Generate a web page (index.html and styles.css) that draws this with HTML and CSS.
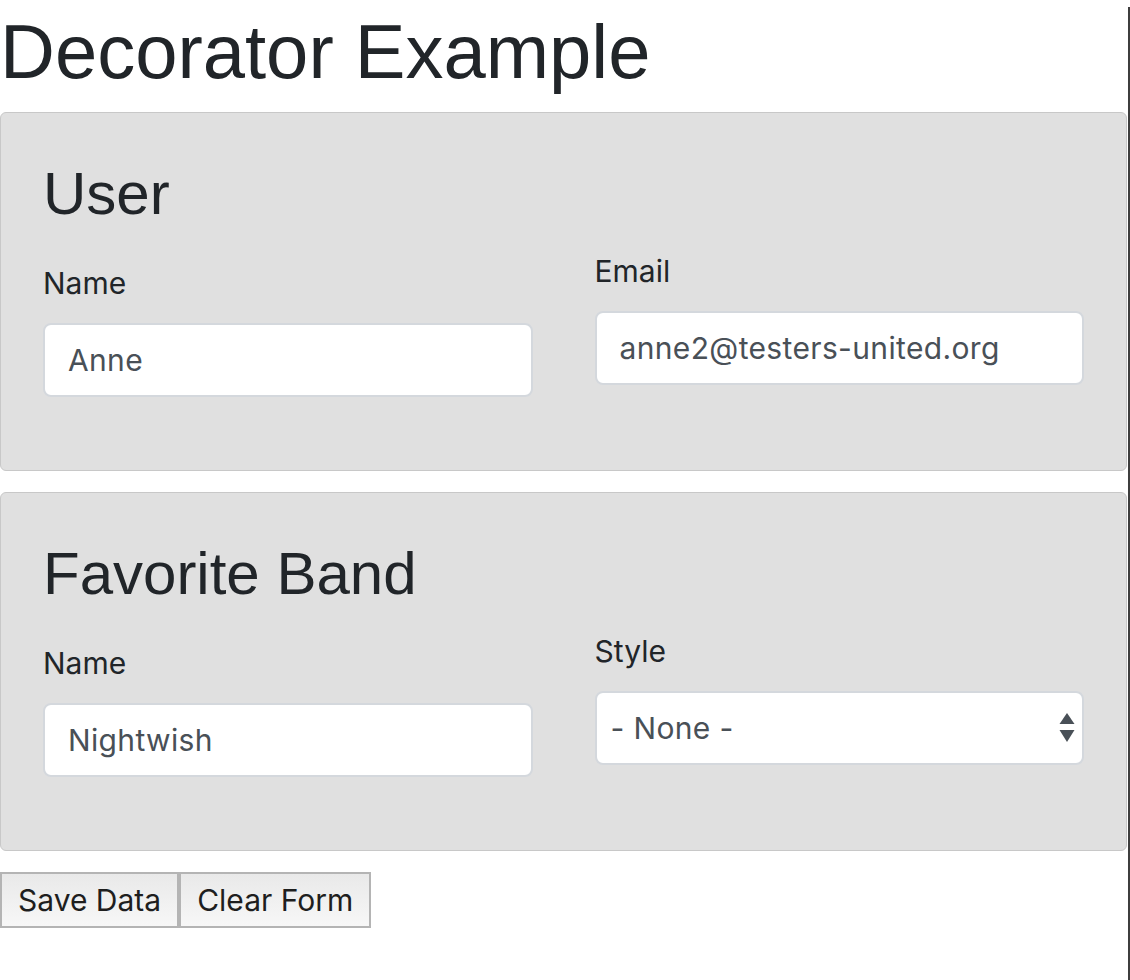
FILE: index.html
```html
<!DOCTYPE html>
<html lang="en">
<head>
<meta charset="utf-8">
<title>Decorator Example</title>
<link rel="stylesheet" href="styles.css">
</head>
<body>
<div class="page">
  <h1 class="title">Decorator Example</h1>
  <form class="form">
    <section class="panel">
      <h2 class="panel-title">User</h2>
      <div class="row">
        <div class="group group-low">
          <label class="label" for="user-name">Name</label>
          <input class="control" id="user-name" type="text" value="Anne">
        </div>
        <div class="group">
          <label class="label" for="user-email">Email</label>
          <input class="control" id="user-email" type="text" value="anne2@testers-united.org">
        </div>
      </div>
    </section>
    <section class="panel">
      <h2 class="panel-title">Favorite Band</h2>
      <div class="row">
        <div class="group group-low">
          <label class="label" for="band-name">Name</label>
          <input class="control" id="band-name" type="text" value="Nightwish">
        </div>
        <div class="group">
          <label class="label" for="band-style">Style</label>
          <div class="select-wrap">
            <select class="control select" id="band-style">
              <option>- None -</option>
            </select>
            <svg class="select-arrows" width="16" height="30" viewBox="0 0 16 30" aria-hidden="true">
              <path d="M8 0 L15.5 11 L0.5 11 Z" fill="#495057"/>
              <path d="M0.5 17 L15.5 17 L8 29 Z" fill="#495057"/>
            </svg>
          </div>
        </div>
      </div>
    </section>
    <div class="actions">
      <button type="button" class="btn">Save Data</button><button type="button" class="btn">Clear Form</button>
    </div>
  </form>
</div>
</body>
</html>
```
FILE: styles.css
```css
html, body {
  margin: 0;
  padding: 0;
  background: #ffffff;
}

body {
  font-family: Inter, "Noto Sans", sans-serif;
  font-size: 30px;
  color: #212529;
}

.page {
  box-sizing: border-box;
  min-height: 100vh;
  border-right: 2px solid #3e3e3e;
}

.title {
  font-family: "Liberation Sans", Arial, sans-serif;
  font-weight: 400;
  font-size: 76px;
  line-height: 90px;
  margin: 7px 0 15px 0;
  color: #212529;
}

.form {
  margin: 0;
}

.panel {
  box-sizing: border-box;
  margin: 0 1px 21px 0;
  padding: 45px 42px 43px 42px;
  background: #e0e0e0;
  border: 1px solid #c8c8c8;
  border-radius: 6px;
}

.panel-title {
  font-family: "Liberation Sans", Arial, sans-serif;
  font-weight: 400;
  font-size: 60px;
  line-height: 72px;
  margin: 0 0 19px 0;
  color: #212529;
}

.row {
  display: grid;
  grid-template-columns: 1fr 1fr;
  column-gap: 62px;
  align-items: start;
}

.group {
  display: flex;
  flex-direction: column;
  margin-bottom: 30px;
}

.group-low {
  margin-top: 12px;
}

.label {
  display: block;
  line-height: 45px;
  margin-bottom: 17px;
  color: #212529;
}

.control {
  box-sizing: border-box;
  width: 100%;
  height: 74px;
  margin: 0;
  padding: 0 23px;
  font-family: Inter, "Noto Sans", sans-serif;
  font-size: 30px;
  letter-spacing: 0.35px;
  color: #495057;
  background: #ffffff;
  border: 2px solid #d4d8dd;
  border-radius: 8px;
  outline: none;
}

.select-wrap {
  position: relative;
}

.select {
  -webkit-appearance: none;
  appearance: none;
  padding: 0 50px 0 14px;
}

.select-arrows {
  position: absolute;
  right: 9px;
  top: 22px;
  pointer-events: none;
}

.actions {
  display: flex;
  margin-top: 1px;
}

.btn {
  box-sizing: border-box;
  height: 56px;
  margin: 0;
  padding: 8px 16px;
  font-family: Inter, "Noto Sans", sans-serif;
  font-size: 30px;
  line-height: 36px;
  color: #1e1e1e;
  background: linear-gradient(to bottom, #e9e9e9, #f7f7f7);
  border: 2px solid #b4b4b4;
  border-radius: 0;
}
```
